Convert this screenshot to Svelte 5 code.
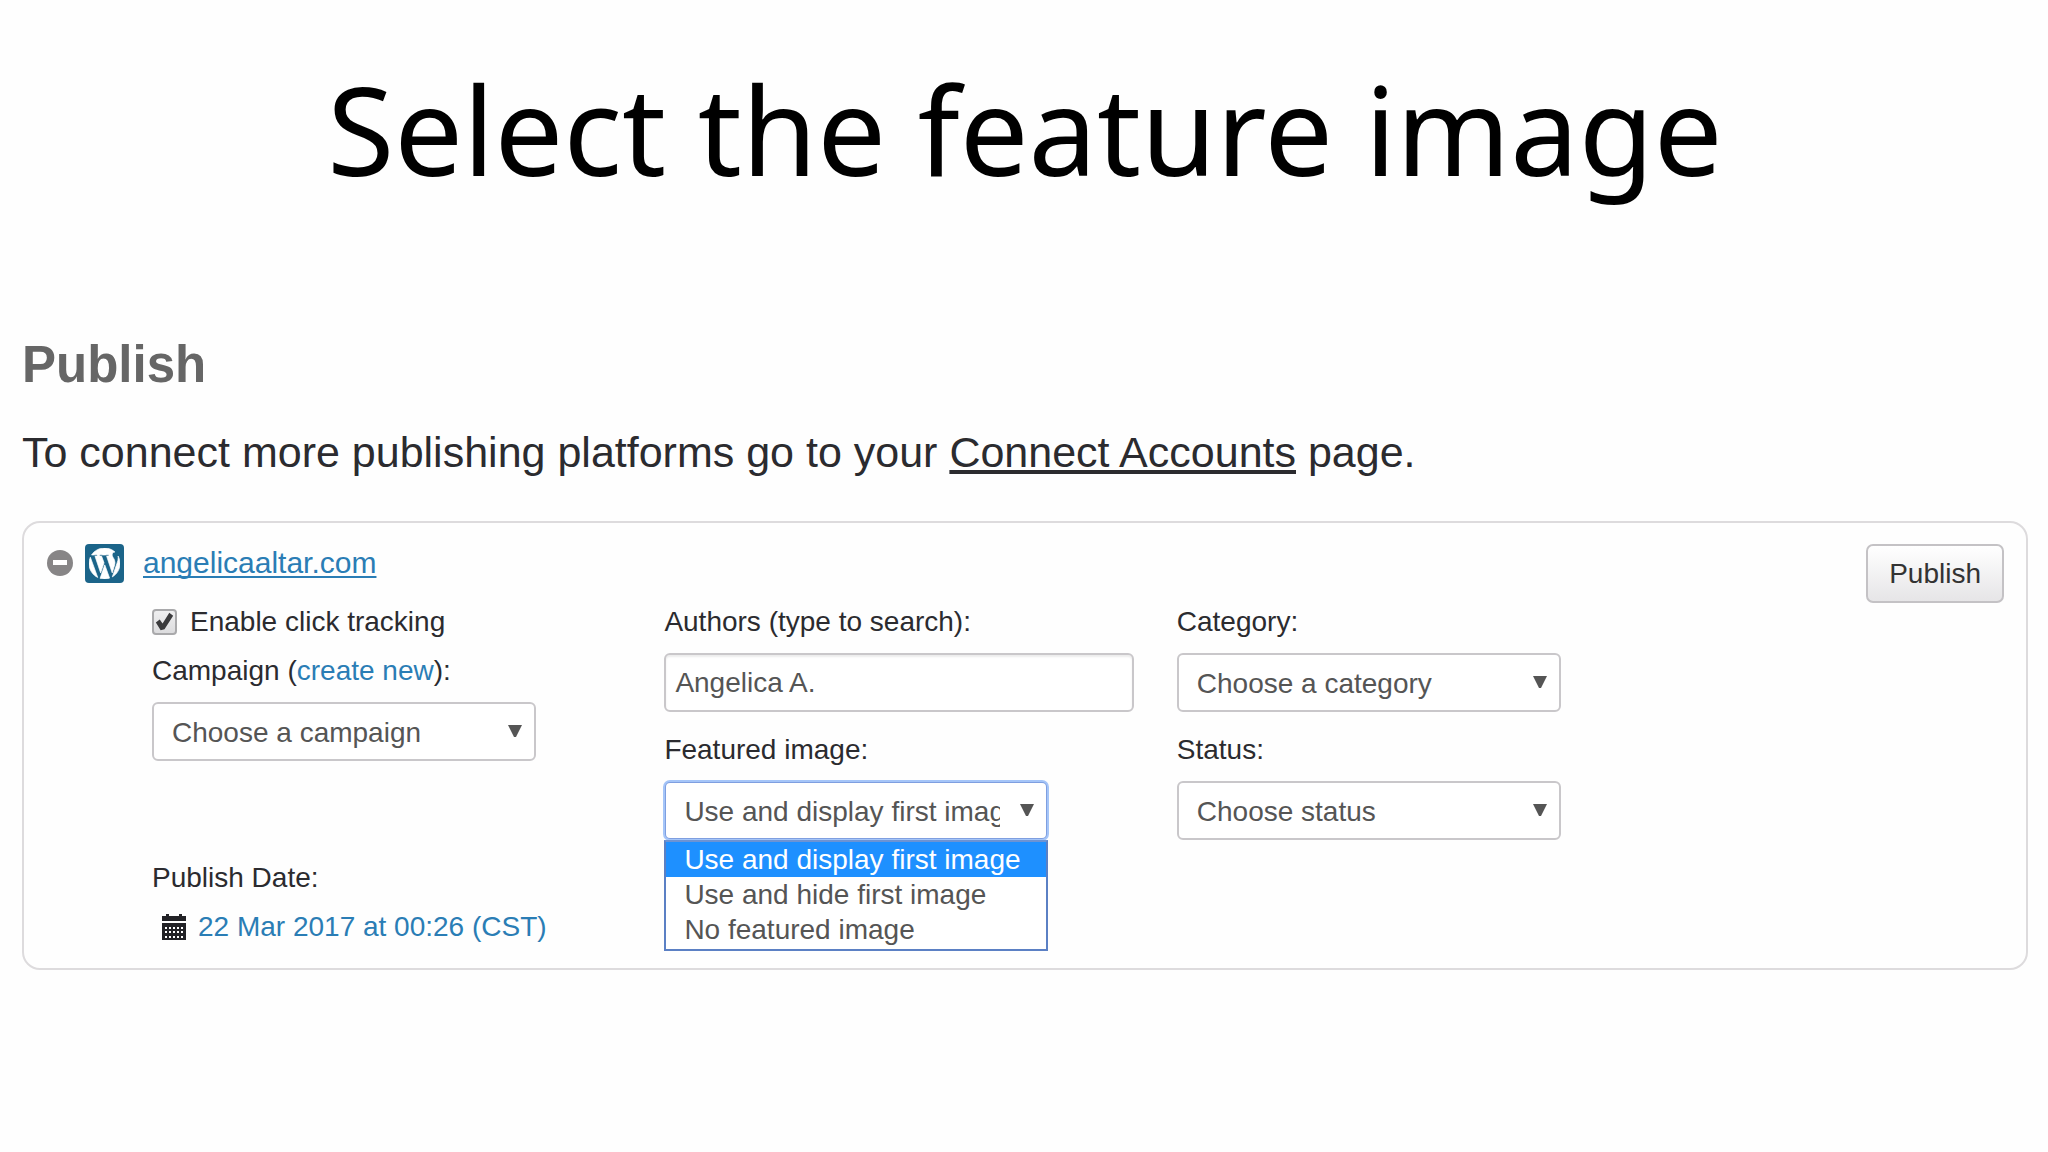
<script>
  const featuredOptions = [
    'Use and display first image',
    'Use and hide first image',
    'No featured image',
  ];

  let tracking = $state(true);
  let author = $state('Angelica A.');
  let featured = $state(featuredOptions[0]);
  let menuOpen = $state(true);

  function choose(option) {
    featured = option;
    menuOpen = false;
  }
</script>

{#snippet arrow()}
  <svg class="arrow" viewBox="0 0 14 12" aria-hidden="true"><path d="M0 0H14L8 12H6Z" /></svg>
{/snippet}

<main class="page">
  <h1>Select the feature image</h1>

  <section class="publish">
    <h2>Publish</h2>
    <p class="intro">
      To connect more publishing platforms go to your <a href="#accounts">Connect Accounts</a> page.
    </p>

    <form class="panel" onsubmit={(e) => e.preventDefault()}>
      <div class="body">
        <header class="site">
          <button class="icon-button" type="button" aria-label="Remove account">
            <svg class="minus" viewBox="0 0 26 26" aria-hidden="true">
              <circle cx="13" cy="13" r="13" fill="#878586" />
              <rect x="6" y="10" width="14" height="5" fill="#fff" />
            </svg>
          </button>
          <svg class="wordpress" viewBox="0 0 39 39" aria-hidden="true">
            <rect width="39" height="39" rx="4" fill="#1b6489" />
            <svg x="4" y="4" width="31" height="31" viewBox="33 33 446 446">
              <path
                fill="#fff"
                stroke="#fff"
                stroke-width="10"
                d="M33 256c0-32.3 6.9-63 19.3-90.7l106.4 291.4C84.3 420.5 33 344.2 33 256zm223 223c-21.9 0-43-3.2-63-9.1l66.9-194.4 68.5 187.8c.5 1.1 1 2.1 1.6 3.1-23.1 8.1-48 12.6-74 12.6zm30.7-327.5c13.4-.7 25.5-2.1 25.5-2.1 12-1.4 10.6-19.1-1.4-18.4 0 0-36.1 2.8-59.4 2.8-21.9 0-58.7-2.8-58.7-2.8-12-.7-13.4 17.7-1.4 18.4 0 0 11.4 1.4 23.4 2.1l34.7 95.2L200.6 393l-81.2-241.5c13.4-.7 25.5-2.1 25.5-2.1 12-1.4 10.6-19.1-1.4-18.4 0 0-36.1 2.8-59.4 2.8-4.2 0-9.1-.1-14.4-.3C109.6 73 178.1 33 256 33c58 0 110.9 22.2 150.6 58.5-1-.1-1.9-.2-2.9-.2-21.9 0-37.4 19.1-37.4 39.6 0 18.4 10.6 33.9 21.9 52.3 8.5 14.8 18.4 33.9 18.4 61.5 0 19.1-7.3 41.2-17 72.1l-22.2 74.3-80.7-239.6zm81.4 297.2l68.1-196.9c12.7-31.8 17-57.2 17-79.9 0-8.2-.5-15.8-1.5-22.9 17.4 31.8 27.3 68.2 27.3 107 0 82.3-44.6 154.1-110.9 192.7z"
              />
            </svg>
          </svg>
          <a class="domain" href="#site">angelicaaltar.com</a>
        </header>

        <div class="columns">
          <div class="column">
            <label class="line check">
              <span class="box">
                <input type="checkbox" bind:checked={tracking} />
                {#if tracking}
                  <svg class="tick" viewBox="0 0 26 26" aria-hidden="true">
                    <path d="M4 14L8 11L11 15L18 4L22 7L13 21L9 22Z" fill="#3b3b3d" />
                  </svg>
                {/if}
              </span>
              Enable click tracking
            </label>
            <div class="field">
              <div class="line">
                <label for="campaign">Campaign</label>&nbsp;(<a href="#new">create new</a>):
              </div>
              <div class="select">
                <select id="campaign"><option>Choose a campaign</option></select>
                {@render arrow()}
              </div>
            </div>
            <div class="date">
              <div class="line">Publish Date:</div>
              <div class="line when">
                <svg class="calendar" viewBox="0 0 24 26" aria-hidden="true">
                  <path d="M0 2H4V0H7V2H17V0H20V2H24V7H0ZM0 9H24V26H0Z" fill="#222226" />
                  <path
                    d="M3 14H22M3 18H22M3 23H22"
                    fill="none"
                    stroke="#fff"
                    stroke-width="2"
                    stroke-dasharray="2 2"
                  />
                </svg>
                <a href="#date">22 Mar 2017 at 00:26 (CST)</a>
              </div>
            </div>
          </div>

          <div class="column">
            <div class="field">
              <label class="line" for="authors">Authors (type to search):</label>
              <input class="text" id="authors" type="text" bind:value={author} />
            </div>
            <div class="field">
              <label class="line" for="featured">Featured image:</label>
              <div class="select" class:open={menuOpen}>
                <select id="featured" bind:value={featured}>
                  {#each featuredOptions as option}
                    <option>{option}</option>
                  {/each}
                </select>
                {@render arrow()}
                {#if menuOpen}
                  <div class="menu" role="listbox" aria-label="Featured image">
                    {#each featuredOptions as option}
                      <button
                        type="button"
                        role="option"
                        aria-selected={option === featured}
                        class:selected={option === featured}
                        onclick={() => choose(option)}>{option}</button
                      >
                    {/each}
                  </div>
                {/if}
              </div>
            </div>
          </div>

          <div class="column">
            <div class="field">
              <label class="line" for="category">Category:</label>
              <div class="select">
                <select id="category"><option>Choose a category</option></select>
                {@render arrow()}
              </div>
            </div>
            <div class="field">
              <label class="line" for="status">Status:</label>
              <div class="select">
                <select id="status"><option>Choose status</option></select>
                {@render arrow()}
              </div>
            </div>
          </div>
        </div>
      </div>

      <button class="submit" type="submit">Publish</button>
    </form>
  </section>
</main>

<style>
  :global(body) {
    margin: 0;
    background: #fefefe;
  }

  .page {
    padding: 49px 20px 48px 22px;
    font-family: 'Liberation Sans', Arial, sans-serif;
    font-size: 28px;
    color: #2b2b2f;
  }

  h1 {
    margin: 0 0 126px;
    font-family: 'Noto Sans', 'Open Sans', sans-serif;
    font-size: 122px;
    font-weight: 400;
    line-height: 160px;
    text-align: center;
    color: #000;
  }

  h2 {
    margin: 0 0 32px;
    font-size: 51px;
    line-height: 60px;
    color: #666;
  }

  .intro {
    margin: 0 0 44px;
    font-size: 43px;
    line-height: 50px;
  }

  .intro a {
    color: inherit;
    text-decoration-thickness: 4px;
    text-underline-offset: 3px;
    text-decoration-skip-ink: none;
  }

  .panel {
    display: flex;
    align-items: flex-start;
    gap: 177px;
    padding: 21px 22px 17px 23px;
    border: 2px solid #dddbdd;
    border-radius: 18px;
  }

  .body {
    flex: 1;
    min-width: 0;
  }

  .site {
    display: flex;
    align-items: center;
    height: 38px;
    margin-bottom: 15px;
  }

  .icon-button {
    display: flex;
    padding: 0;
    border: 0;
    background: none;
  }

  .minus {
    width: 26px;
    height: 26px;
  }

  .wordpress {
    width: 39px;
    height: 39px;
    margin: 0 19px 0 12px;
  }

  a {
    color: #2a7db5;
    text-decoration: none;
  }

  .intro a,
  .domain {
    text-decoration-line: underline;
  }

  .domain {
    font-size: 30px;
    text-decoration-thickness: 2px;
    text-underline-offset: 3px;
    text-decoration-skip-ink: none;
  }

  .columns {
    display: grid;
    grid-template-columns: repeat(3, minmax(0, 1fr));
    column-gap: 43px;
    padding-left: 105px;
    margin-right: 43px;
  }

  .column {
    display: flex;
    flex-direction: column;
  }

  .line {
    display: flex;
    align-items: center;
    height: 49px;
    white-space: nowrap;
  }

  .field {
    display: flex;
    flex-direction: column;
    margin-bottom: 13px;
  }

  .check {
    gap: 13px;
  }

  .box {
    position: relative;
    display: flex;
  }

  .box input {
    appearance: none;
    width: 25px;
    height: 26px;
    margin: 0;
    border: 2px solid #a9a9ab;
    border-radius: 4px;
    background: linear-gradient(#efeff0, #dcdcde);
  }

  .tick {
    position: absolute;
    inset: 0;
  }

  .select {
    position: relative;
    width: 100%;
    max-width: 384px;
    margin-top: 7px;
  }

  select,
  .text {
    box-sizing: border-box;
    display: block;
    width: 100%;
    height: 59px;
    border: 2px solid #c9c7ca;
    border-radius: 6px;
    background: #fff;
    font: inherit;
    color: #555;
  }

  select {
    appearance: none;
    padding: 2px 46px 0 18px;
  }

  .text {
    margin-top: 7px;
    padding: 0 9px;
    box-shadow: inset 0 2px 2px #ececec;
  }

  .open select {
    border-color: #7f9fe0;
    outline: 2px solid #a5c5f8;
    outline-offset: -1px;
  }

  .arrow {
    position: absolute;
    top: 23px;
    right: 14px;
    width: 14px;
    height: 12px;
    fill: #555;
    pointer-events: none;
  }

  .menu {
    position: absolute;
    top: 100%;
    left: 0;
    right: 0;
    display: flex;
    flex-direction: column;
    padding-bottom: 2px;
    border: 2px solid #5b80c4;
    border-top-color: #6d93d3;
    background: #fff;
  }

  .menu button {
    height: 35px;
    padding: 0 18px;
    border: 0;
    background: none;
    font: inherit;
    line-height: 35px;
    text-align: left;
    white-space: nowrap;
    color: #555;
  }

  .menu .selected {
    background: #1e90ff;
    color: #fff;
  }

  .date {
    margin-top: 79px;
  }

  .when {
    gap: 12px;
    padding-left: 10px;
  }

  .calendar {
    width: 24px;
    height: 26px;
  }

  .submit {
    height: 59px;
    padding: 0 21px;
    border: 2px solid #c4c2c5;
    border-radius: 7px;
    background: linear-gradient(#fff, #e6e5e7);
    font: inherit;
    color: #333;
  }
</style>
